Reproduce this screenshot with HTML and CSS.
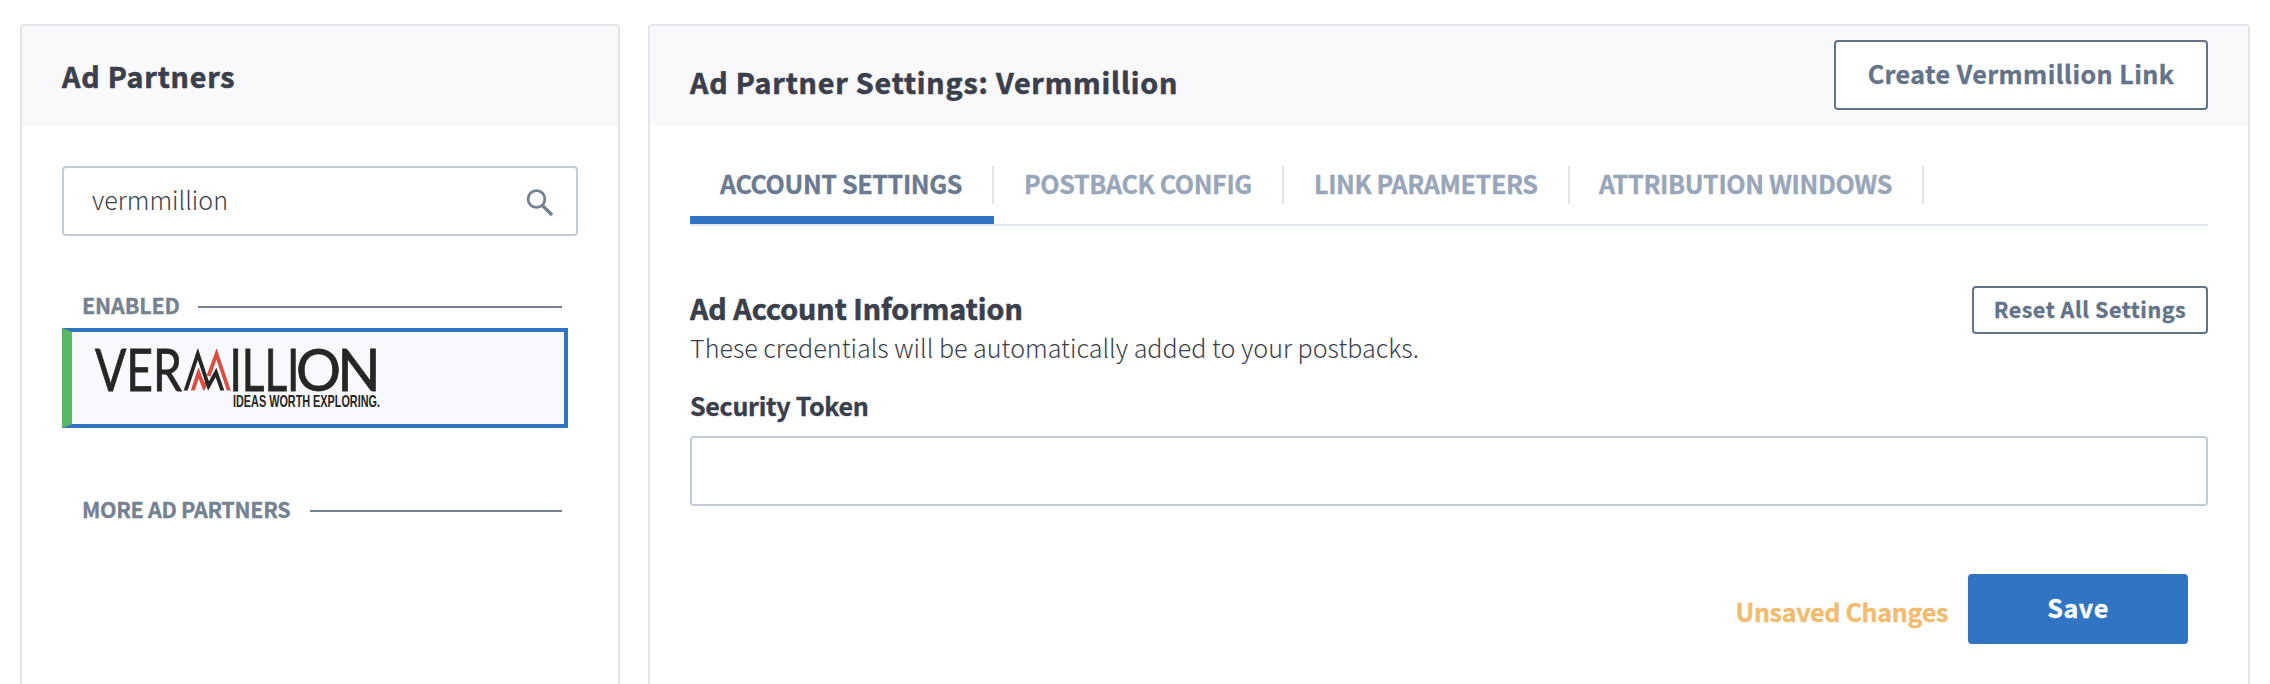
FILE: index.html
```html
<!DOCTYPE html>
<html lang="en">
<head>
<meta charset="utf-8">
<title>Ad Partners</title>
<link rel="stylesheet" href="styles.css">
</head>
<body>
<main class="layout">
  <aside class="panel partners">
    <header class="panel-header"><h1 class="title">Ad Partners</h1></header>
    <div class="panel-body">
      <div class="search">
        <span class="search-text">vermmillion</span>
        <svg class="search-icon" width="28" height="28" viewBox="0 0 28 28"><circle cx="10.5" cy="10" r="8.4" fill="none" stroke="#758292" stroke-width="2.8"/><path d="M16.500 16.500L26 26" stroke="#758292" stroke-width="3.4"/></svg>
      </div>
      <h2 class="group enabled"><span>ENABLED</span></h2>
      <div class="partner-card">
        <svg class="logo" width="290" height="64" viewBox="0 0 290 64" role="img" aria-label="Vermillion">
          <clipPath id="cap"><rect x="80" y="2.300" width="70" height="42.200"/></clipPath>
          <text class="logo-name" x="0" y="44.500" textLength="87" lengthAdjust="spacingAndGlyphs">VER</text>
          <g clip-path="url(#cap)" fill="none" stroke-width="3.8">
            <path d="M97 47L103.500 27L109 41L112 35M113.500 30L121.500 8L135 48" stroke="#dc4c40"/>
            <path d="M89.500 48L102.800 8L113.500 40L121 26.500L128.500 48" stroke="#262624"/>
          </g>
          <text class="logo-name" y="44.500"><tspan x="134.400" textLength="70" lengthAdjust="spacingAndGlyphs">ILLI</tspan><tspan x="201" textLength="45" lengthAdjust="spacingAndGlyphs">O</tspan><tspan x="242.500" textLength="43" lengthAdjust="spacingAndGlyphs">N</tspan></text>
          <text class="logo-tag" x="138" y="61" textLength="147" lengthAdjust="spacingAndGlyphs">IDEAS WORTH EXPLORING.</text>
        </svg>
      </div>
      <h2 class="group more"><span>MORE AD PARTNERS</span></h2>
    </div>
  </aside>
  <section class="panel settings">
    <header class="panel-header">
      <h1 class="title settings-title">Ad Partner Settings: Vermmillion</h1>
      <button class="button create">Create Vermmillion Link</button>
    </header>
    <div class="panel-body">
      <nav class="tabs">
        <a class="tab active"><span class="tab-label">ACCOUNT SETTINGS</span></a>
        <a class="tab postback"><span class="tab-label">POSTBACK CONFIG</span></a>
        <a class="tab params"><span class="tab-label">LINK PARAMETERS</span></a>
        <a class="tab windows"><span class="tab-label">ATTRIBUTION WINDOWS</span></a>
      </nav>
      <div class="section-head">
        <div>
          <h2 class="section-title">Ad Account Information</h2>
          <p class="section-text">These credentials will be automatically added to your postbacks.</p>
        </div>
        <button class="button reset">Reset All Settings</button>
      </div>
      <label class="field-label" for="token">Security Token</label>
      <input class="field" id="token" type="text">
      <footer class="actions">
        <span class="unsaved">Unsaved Changes</span>
        <button class="save">Save</button>
      </footer>
    </div>
  </section>
</main>
</body>
</html>
```

FILE: styles.css
```css
* { box-sizing: border-box; }
body, h1, h2, p { margin: 0; }
body {
  background: #fff;
  color: #3a3f4b;
  font-family: "Noto Sans CJK SC", "Noto Sans", sans-serif;
  font-size: 25.07px;
}
button, input { font: inherit; }
.layout {
  display: grid;
  grid-template-columns: 600px 1602px;
  gap: 28px;
  height: 684px;
  padding: 24px 20px 0;
}
.panel {
  height: 660px;
  border: 2px solid #e1e6ea;
  border-bottom: 0;
  border-radius: 4px 4px 0 0;
}
.panel-header {
  display: flex;
  justify-content: space-between;
  height: 100px;
  padding: 0 40px;
  background: #f9f9fc;
}
.title {
  font-size: 28.65px;
  line-height: 99px;
  font-weight: 700;
  letter-spacing: .83px;
}
.title, .section-title { -webkit-text-stroke: .6px currentColor; }
.group, .button, .tab, .field-label, .unsaved, .save { -webkit-text-stroke: .35px currentColor; }
.settings-title { line-height: 111px; }
.panel-body { padding: 40px 40px 0; }

.search {
  display: flex;
  align-items: center;
  justify-content: space-between;
  width: 516px;
  height: 70px;
  padding: 0 22px 0 28px;
  border: 2px solid #c2ccd7;
  border-radius: 4px;
}
.search-text { font-weight: 300; line-height: 62px; padding-bottom: 4px; }
.search-icon { margin-top: 4px; }

.group {
  display: flex;
  align-items: center;
  gap: 20px;
  width: 500px;
  height: 34px;
  padding-left: 20px;
  color: #758292;
  font-size: 21.5px;
  font-weight: 700;
  line-height: 30px;
}
.group span { padding-bottom: 4px; }
.group::after { content: ""; flex: 1; height: 2px; background: #758292; }
.enabled { margin-top: 54px; gap: 18px; letter-spacing: -.15px; }
.more { margin-top: 66px; letter-spacing: -.32px; }
.partner-card {
  width: 506px;
  height: 100px;
  margin-top: 4px;
  padding: 14px 0 0 23px;
  border: 4px solid #3174c3;
  border-left: 10px solid #59b766;
  background: #f8f9fd;
}
.logo { display: block; overflow: visible; }
.logo-name { font: 400 58.6px Lato, sans-serif; fill: #262624; stroke: #262624; stroke-width: .8px; }
.logo-tag { font: 700 15.7px "Liberation Sans Narrow", "Liberation Sans", sans-serif; fill: #262624; }

.button {
  padding: 0;
  border: 2px solid #647387;
  border-radius: 4px;
  background: #fff;
  color: #647387;
  font-weight: 700;
}
.create { width: 374px; height: 70px; margin-top: 14px; padding-bottom: 5px; letter-spacing: .44px; }
.reset { width: 236px; height: 48px; padding-bottom: 2px; font-size: 21.5px; line-height: 42px; letter-spacing: .53px; }

.tabs { display: flex; height: 60px; border-bottom: 2px solid #e1e6ea; }
.tab { height: 58px; color: #98a6ba; font-weight: 700; letter-spacing: -.36px; }
.tab-label { display: block; height: 38px; border-right: 2px solid #e1e6ea; line-height: 34px; padding-left: 30px; white-space: nowrap; }
.active { width: 304px; border-bottom: 8px solid #3174c3; color: #6a7b91; }
.postback { width: 290px; }
.params { width: 286px; }
.windows { width: 354px; }
.windows .tab-label { padding-left: 29px; }

.section-head { display: flex; justify-content: space-between; margin-top: 60px; height: 106px; }
.section-title { height: 42px; font-size: 28.65px; font-weight: 700; line-height: 44px; }
.section-text { font-weight: 300; line-height: 38px; letter-spacing: .02px; }
.field-label { display: block; height: 44px; line-height: 26px; font-weight: 700; letter-spacing: -.32px; }
.field { display: block; width: 1518px; height: 70px; border: 2px solid #c2ccd7; border-radius: 4px; background: #fff; }
.actions { display: flex; justify-content: flex-end; gap: 20px; margin-top: 68px; padding-right: 20px; }
.unsaved { color: #f2bc70; font-weight: 700; line-height: 74px; letter-spacing: -.33px; }
.save { width: 220px; height: 70px; padding: 0 0 5px; border: 0; border-radius: 4px; background: #3174c3; color: #fff; font-weight: 700; letter-spacing: .6px; }
```
